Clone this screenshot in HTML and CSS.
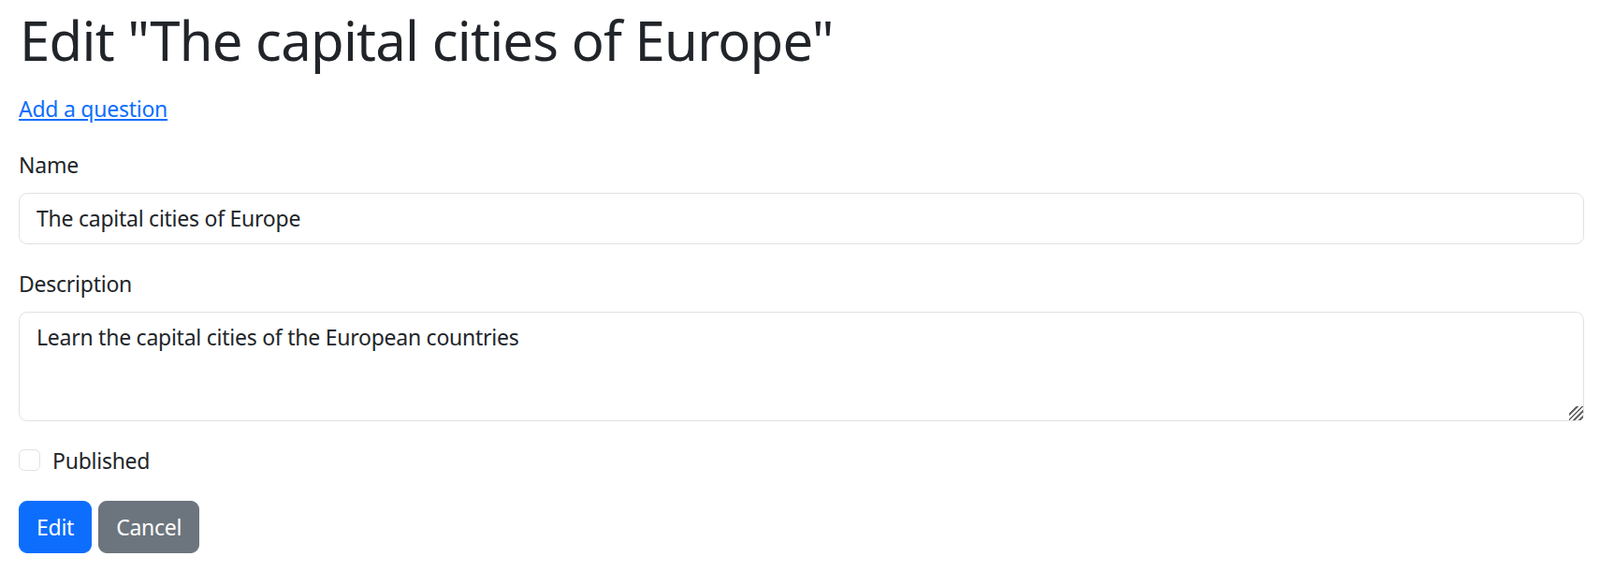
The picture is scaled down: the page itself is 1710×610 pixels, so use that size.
FILE: index.html
```html
<!DOCTYPE html>
<html lang="en">
<head>
<meta charset="utf-8">
<title>Edit quiz</title>
<link rel="stylesheet" href="styles.css">
</head>
<body>
<main class="container">
  <h1 class="title">Edit "The capital cities of Europe"</h1>
  <p class="links"><a href="#" class="link">Add a question</a></p>
  <form class="form">
    <div class="field">
      <label class="label" for="name">Name</label>
      <input class="control" id="name" type="text" value="The capital cities of Europe">
    </div>
    <div class="field">
      <label class="label" for="desc">Description</label>
      <textarea class="control area" id="desc" rows="2">Learn the capital cities of the European countries</textarea>
    </div>
    <div class="field check">
      <input class="check-input" id="pub" type="checkbox">
      <label class="check-label" for="pub">Published</label>
    </div>
    <div class="actions">
      <button type="submit" class="btn btn-primary">Edit</button>
      <a href="#" class="btn btn-secondary">Cancel</a>
    </div>
  </form>
</main>
</body>
</html>
```
FILE: styles.css
```css
* { box-sizing: border-box; }
html, body { margin: 0; background: #fff; }
body {
  font-family: "Noto Sans", "Open Sans", sans-serif;
  font-size: 23px;
  line-height: 36px;
  letter-spacing: -0.25px;
  color: #212529;
}
.container { padding: 0 17px 0 20px; }
.title {
  font-size: 58px;
  font-weight: 400;
  line-height: 1.2;
  letter-spacing: -0.75px;
  margin: 0 0 20px 1px;
  padding-top: 8px;
}
.links { margin: 0 0 24px; }
.link { color: #0d6efd; text-decoration: underline; }
.form { margin: 0; }
.field { margin-bottom: 24px; }
.label { display: block; margin-bottom: 12px; }
.control {
  display: block;
  width: 100%;
  font: inherit;
  letter-spacing: inherit;
  color: #212529;
  padding: 8.5px 18px;
  border: 1px solid #dee2e6;
  border-radius: 9px;
  background: #fff;
  line-height: 36px;
}
.area { height: 117px; resize: vertical; }
.area::-webkit-scrollbar { width: 22px; height: 22px; }
.area::-webkit-resizer {
  background: linear-gradient(-45deg,
    transparent 0 2px, #686868 2px 4px,
    transparent 4px 6px, #686868 6px 8px,
    transparent 8px 10px, #686868 10px 12px,
    transparent 12px 14px, #686868 14px 16px,
    transparent 16px);
}
.check { display: flex; align-items: center; gap: 13px; margin-bottom: 25px; }
.check-input {
  appearance: none;
  width: 23px; height: 23px; margin: 0;
  border: 1px solid #dee2e6;
  border-radius: 6px;
  background: #fff;
}
.actions { display: flex; gap: 7px; }
.btn {
  display: inline-block;
  font: inherit;
  letter-spacing: inherit;
  line-height: 36px;
  padding: 9px 18px;
  border: 1px solid transparent;
  border-radius: 9px;
  color: #fff;
  text-decoration: none;
  cursor: pointer;
}
.btn-primary { background: #0d6efd; border-color: #0d6efd; }
.btn-secondary { background: #6c757d; border-color: #6c757d; }
```
